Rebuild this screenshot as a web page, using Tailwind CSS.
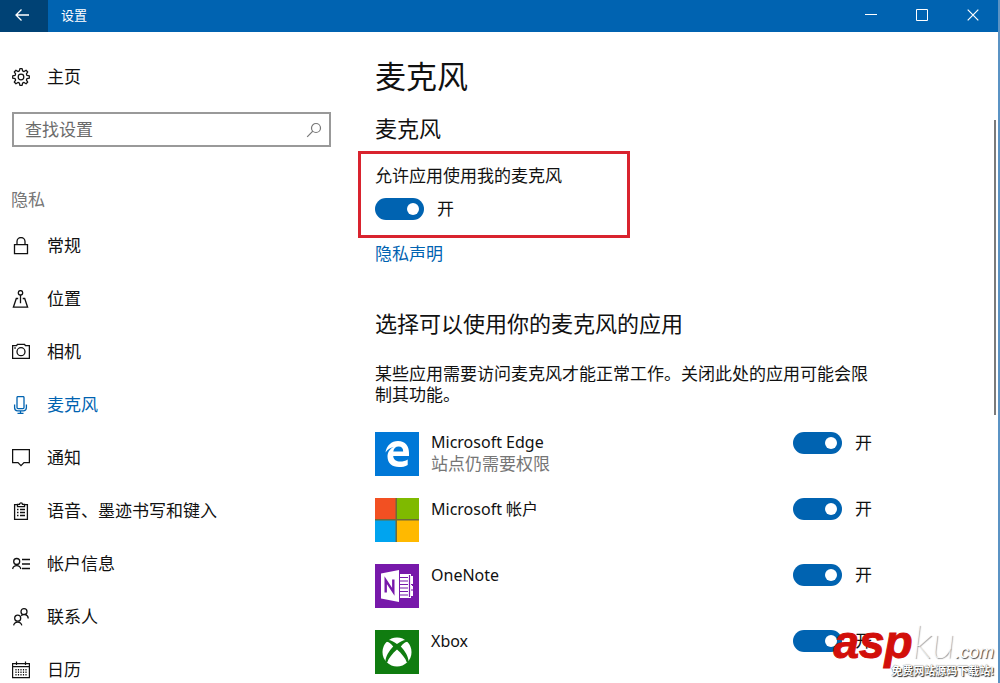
<!DOCTYPE html>
<html lang="zh-CN">

<head>
    <meta charset="UTF-8">
    <meta name="viewport" content="width=device-width, initial-scale=1.0">
    <title>设置</title>
    <script src="https://cdn.jsdelivr.net/npm/@tailwindcss/browser@4"></script>
</head>

<body class="h-screen overflow-hidden bg-white font-['Noto_Sans','Noto_Sans_CJK_SC',sans-serif] text-[17px] leading-[22px] text-[#111]">

    <div class="relative flex h-full flex-col border-r-2 border-[#5b93c4]">
        <!-- Title bar -->
        <header class="flex h-8 shrink-0 items-center bg-[#0063b1] pb-0.5 text-white">
            <button aria-label="返回" class="-mb-0.5 flex h-8 w-12 items-center justify-center bg-[#004275]">
                <svg class="-mt-0.5 -ml-1 size-4" viewBox="0 0 16 16" fill="none" stroke="currentColor" stroke-width="1.3"><path d="M15 8H2M7.500 2.500 2 8l5.500 5.500" /></svg>
            </button>
            <span class="ml-[13px] flex-1 text-[13px]">设置</span>
            <div class="flex h-full">
                <button aria-label="最小化" class="flex w-[51px] items-center justify-center">
                    <svg class="size-3" viewBox="0 0 12 12" stroke="currentColor"><path d="M0 5.500h12" /></svg>
                </button>
                <button aria-label="最大化" class="flex w-[51px] items-center justify-center">
                    <svg class="size-3" viewBox="0 0 12 12" fill="none" stroke="currentColor"><path d="M.5.5h11v11H.5z" /></svg>
                </button>
                <button aria-label="关闭" class="flex w-[51px] items-center justify-center">
                    <svg class="size-3" viewBox="0 0 12 12" stroke="currentColor" stroke-width="1.200"><path d="m.7.7 10.600 10.600M11.300.7.7 11.300" /></svg>
                </button>
            </div>
        </header>

        <div class="flex min-h-0 flex-1">
            <!-- Sidebar -->
            <aside class="w-[331px] shrink-0 pl-3 pt-[34px]">
                <a href="#" class="flex items-center gap-[17px]">
                    <svg class="size-[18px]" viewBox="1 0 16 16" fill="none" stroke="currentColor" stroke-width="1.100" stroke-linejoin="round">
                        <path d="M7.600 2.600 8 .6h2l.4 2 1.300.6 1.800-1.200 1.500 1.500-1.200 1.800.5 1.300 2.100.4v2l-2.100.4-.5 1.300 1.200 1.800-1.500 1.500-1.800-1.200-1.300.6-.4 2H8l-.4-2-1.300-.6L4.500 14 3 12.500l1.200-1.800-.5-1.300-2.100-.4V7l2.100-.4.5-1.300L3 3.500 4.500 2l1.800 1.200z" />
                        <circle cx="9" cy="8" r="2.500" />
                    </svg>
                    主页
                </a>
                <label class="mt-6 flex h-[35px] items-center border-2 border-[#999] px-[11px]">
                    <input type="text" placeholder="查找设置" aria-label="查找设置" class="min-w-0 flex-1 outline-none placeholder:text-[#6b6b6b]">
                    <svg class="-mr-1 size-4 text-[#777]" viewBox="0 0 16 16" fill="none" stroke="currentColor" stroke-width="1.200"><circle cx="10" cy="6" r="4.500" /><path d="m6.800 9.200-5.600 5.600" /></svg>
                </label>
                <h2 class="-ml-px mt-[42px] text-[#767676]">隐私</h2>
                <nav class="mt-2">
                    <a href="#" class="flex h-[53px] items-center gap-[17px]">
                        <svg class="size-[18px]" viewBox="0 0 18 18" fill="none" stroke="currentColor" stroke-width="1.300"><path d="M2.500 7.600h13v9h-13zM5 7.600V4.500a4 4 0 0 1 8 0v3.100" /></svg>
                        常规
                    </a>
                    <a href="#" class="flex h-[53px] items-center gap-[17px]">
                        <svg class="size-[18px]" viewBox="0 0 18 18" fill="none" stroke="currentColor" stroke-width="1.300"><circle cx="8.500" cy="2.800" r="2.200" /><path d="M8.500 5v8.200M6.200 8.500H4.300L1.400 17.200h14.200L12.700 8.500h-2" /></svg>
                        位置
                    </a>
                    <a href="#" class="flex h-[53px] items-center gap-[17px]">
                        <svg class="size-[18px]" viewBox="0 0 18 18" fill="none" stroke="currentColor" stroke-width="1.300"><path d="M.6 2.600h4l.8-1.300h7.200l.8 1.300h4v12.800H.6z" /><circle cx="9" cy="8.700" r="4" /><path d="M2.300 5h1.500" /></svg>
                        相机
                    </a>
                    <a href="#" aria-current="page" class="flex h-[53px] items-center gap-[17px] text-[#0063b1]">
                        <svg class="size-[18px]" viewBox="0 0 18 18" fill="none" stroke="currentColor" stroke-width="1.300"><rect x="5" y=".6" width="7" height="12" rx="1" /><path d="M2.600 8.500v3.300a3 3 0 0 0 3 3h5.800a3 3 0 0 0 3-3V8.500M8.500 14.800v2.800M5.500 17.400h6" /></svg>
                        麦克风
                    </a>
                    <a href="#" class="flex h-[53px] items-center gap-[17px]">
                        <svg class="size-[18px]" viewBox="0 0 18 18" fill="none" stroke="currentColor" stroke-width="1.300"><path d="M.6.6h16.800v13h-5.400l-3 3-3-3H.6z" /></svg>
                        通知
                    </a>
                    <a href="#" class="flex h-[53px] items-center gap-[17px]">
                        <svg class="size-[18px]" viewBox="0 0 18 18" fill="none" stroke="currentColor" stroke-width="1.300"><path d="M5.500 2.600H2.600v14.800h12.800V2.600h-2.900M5.500 4.600V2.400h2a1.500 1.500 0 0 1 3 0h2v2.200z" /><path d="M5 7.500h1.500M8 7.500h5M5 10.500h1.500M8 10.500h5M5 13.500h1.500M8 13.500h5" /></svg>
                        语音、墨迹书写和键入
                    </a>
                    <a href="#" class="flex h-[53px] items-center gap-[17px]">
                        <svg class="size-[18px]" viewBox="0 0 18 18" fill="none" stroke="currentColor" stroke-width="1.300"><circle cx="4.700" cy="6.500" r="3" /><path d="M.6 14a4.200 4.200 0 0 1 8.200 0M10 4.500h8M10 9h8M10 13.500h8" /></svg>
                        帐户信息
                    </a>
                    <a href="#" class="flex h-[53px] items-center gap-[17px]">
                        <svg class="size-[18px]" viewBox="0 0 18 18" fill="none" stroke="currentColor" stroke-width="1.300"><circle cx="12" cy="3.700" r="3" /><circle cx="5.700" cy="10.200" r="3" /><path d="M1.600 17.400a4.200 4.200 0 0 1 8.200 0M9.200 7.800a4 4 0 0 1 7 2.600" /></svg>
                        联系人
                    </a>
                    <a href="#" class="flex h-[53px] items-center gap-[17px]">
                        <svg class="size-[18px]" viewBox="0 0 18 18" fill="none" stroke="currentColor" stroke-width="1.200"><path d="M.6 2.600h16.800v14H.6zM.6 5.600h16.800M4.500.5v3.500M13.500.5v3.500" /><path stroke-dasharray="1.500 1" d="M4 8v7M6.500 8v7M9 8v7M11.500 8v7M14 8v7" /></svg>
                        日历
                    </a>
                </nav>
            </aside>

            <!-- Settings page -->
            <main class="min-w-0 flex-1 pl-11 pr-[126px] pt-6">
                <h1 class="text-[31px] leading-10">麦克风</h1>
                <h2 class="mt-[18px] text-[22px] leading-7">麦克风</h2>
                <div class="-ml-[17px] mt-[9px] w-[272px] border-3 border-[#d9232e] px-[14px] pb-[15px] pt-[11px]">
                    <label for="mic">允许应用使用我的麦克风</label>
                    <div class="mt-[11px] flex items-center gap-[13px]">
                        <input id="mic" type="checkbox" role="switch" checked class="flex h-[22px] w-[49px] appearance-none items-center rounded-full bg-[#0063b1] px-[5px] before:size-3 before:rounded-full before:bg-white checked:justify-end">
                        <span>开</span>
                    </div>
                </div>
                <a href="#" class="mt-[5px] block text-[#0063b1]">隐私声明</a>

                <h2 class="mt-11 text-[22px] leading-7">选择可以使用你的麦克风的应用</h2>
                <p class="mt-[26px] leading-[21px]">某些应用需要访问麦克风才能正常工作。关闭此处的应用可能会限制其功能。</p>

                <ul class="mt-[27px] flex flex-col gap-[22px]">
                    <li class="flex items-start">
                        <svg class="size-11 shrink-0" viewBox="0 0 44 44"><path fill="#0078d7" d="M0 0h44v44H0z" /><path fill="#fff" d="M10.500 20.500C11.500 13.500 16.500 9 23 9c7.500 0 11 5.200 11 12v3H18.200c.3 4 3.300 5.500 7 5.500 2.800 0 5.300-.8 7.500-2.100v5.500c-2.500 1.500-5.600 2.200-8.700 2.200-7 0-11.500-4-11.500-10.500 0-4.500 2.500-8 6.200-9.700-3.500.6-6.400 2.700-8.200 5.600zM18.300 19.500h9.900c0-3-1.700-4.900-4.600-4.900-2.800 0-4.800 1.900-5.300 4.900z" /></svg>
                        <label for="edge" class="ml-3 flex-1"><span class="block text-base leading-[21px]">Microsoft Edge</span><span class="block text-[#767676]">站点仍需要权限</span></label>
                        <input id="edge" type="checkbox" role="switch" checked class="flex h-[22px] w-[49px] appearance-none items-center rounded-full bg-[#0063b1] px-[5px] before:size-3 before:rounded-full before:bg-white checked:justify-end">
                        <span class="ml-[13px]">开</span>
                    </li>
                    <li class="flex items-start">
                        <svg class="size-11 shrink-0" viewBox="0 0 44 44"><path fill="#6b6a3c" d="M0 0h44v44H0z" /><path fill="#f25022" d="M0 0h20.500v21H0z" /><path fill="#7fba00" d="M22 0h22v21H22z" /><path fill="#00a4ef" d="M0 22.500h20.500V44H0z" /><path fill="#ffb900" d="M22 22.500h22V44H22z" /></svg>
                        <label for="account" class="ml-3 flex-1 text-base leading-[22px]">Microsoft 帐户</label>
                        <input id="account" type="checkbox" role="switch" checked class="flex h-[22px] w-[49px] appearance-none items-center rounded-full bg-[#0063b1] px-[5px] before:size-3 before:rounded-full before:bg-white checked:justify-end">
                        <span class="ml-[13px]">开</span>
                    </li>
                    <li class="flex items-start">
                        <svg class="size-11 shrink-0" viewBox="0 0 44 44"><path fill="#7719aa" d="M0 0h44v44H0z" /><path fill="#fff" d="M6 9.500 24 6v32L6 34.500zM25 10h11v2h2v8h-1v2h1v10h-2v2H25z" /><path stroke="#7719aa" stroke-width="1.200" d="M25 13.500h8M25 17h8M25 20.500h8M25 24h8M25 27.500h8M25 31h8M34.500 11v22M36 20.500h2.500M36 26h2.500" /><path fill="none" stroke="#7719aa" stroke-width="2.400" d="M10.700 28.500V16.200l7.600 11.600V15.500" /></svg>
                        <label for="onenote" class="ml-3 flex-1 text-base leading-[22px]">OneNote</label>
                        <input id="onenote" type="checkbox" role="switch" checked class="flex h-[22px] w-[49px] appearance-none items-center rounded-full bg-[#0063b1] px-[5px] before:size-3 before:rounded-full before:bg-white checked:justify-end">
                        <span class="ml-[13px]">开</span>
                    </li>
                    <li class="flex items-start">
                        <svg class="size-11 shrink-0" viewBox="0 0 44 44"><path fill="#107c10" d="M0 0h44v44H0z" /><circle cx="22" cy="22" r="14.500" fill="#fff" /><path fill="#107c10" d="M11 10.500c3-1.500 7 .5 11 3.500 4-3 8-5 11-3.500l1 1.500c-3-.8-5.500 1.500-8.200 4.500 4.200 4.500 7.700 10 7.700 15l-1.500 1.500C30.500 28 26.500 23.500 22 19.500 17.500 23.500 13.500 28 12 33l-1.500-1.500c0-5 3.500-10.500 7.700-15-2.700-3-5.200-5.300-8.200-4.500z" /></svg>
                        <label for="xbox" class="ml-3 flex-1 text-base leading-[22px]">Xbox</label>
                        <input id="xbox" type="checkbox" role="switch" checked class="flex h-[22px] w-[49px] appearance-none items-center rounded-full bg-[#0063b1] px-[5px] before:size-3 before:rounded-full before:bg-white checked:justify-end">
                        <span class="ml-[13px]">开</span>
                    </li>
                </ul>
            </main>
        </div>

        <!-- Scroll thumb -->
        <div class="absolute right-0.5 top-[120px] h-[295px] w-0.5 bg-[#7a7a7a]"></div>

        <!-- Site watermark -->
        <div class="absolute bottom-1 right-1 flex flex-col items-end font-['Liberation_Sans','Noto_Sans_CJK_SC',sans-serif]">
            <div class="-mb-3 flex items-baseline italic leading-[46px]">
                <span class="text-[46px] font-bold text-[#d20f0a] [-webkit-text-stroke:1px_#d20f0a]">asp</span>
                <span class="font-['Lato'] text-[46px] font-thin text-white [text-shadow:1px_1px_1px_#444]">ku</span>
                <span class="text-[18px] text-white [text-shadow:1px_1px_1px_#444]">.com</span>
            </div>
            <span class="relative text-[11px] font-bold leading-4 text-white [text-shadow:1px_1px_1px_#222,0_0_1px_#444]">免费网站源码下载站!</span>
        </div>
    </div>
</body>

</html>
